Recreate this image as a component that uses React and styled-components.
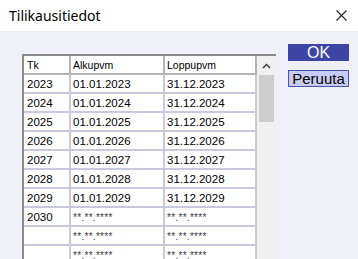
import React from 'react';
import styled, { createGlobalStyle } from 'styled-components';

const GlobalStyle = createGlobalStyle`
  html, body {
    margin: 0;
    padding: 0;
    background: #f0f0f9;
  }
`;

const Window = styled.div`
  width: 358px;
  height: 259px;
  overflow: hidden;
  display: flex;
  flex-direction: column;
  background: #f0f0f9;
`;

const TitleBar = styled.div`
  height: 31px;
  flex: none;
  background: #ffffff;
  display: flex;
  align-items: center;
  justify-content: space-between;
  padding: 0 11px 0 9px;
  font-family: 'Noto Sans', 'Open Sans', sans-serif;
  color: #000;
  h1 {
    margin: 0;
    font-size: 14px;
    font-weight: 400;
  }
`;

const Body = styled.div`
  flex: 1;
  display: flex;
  align-items: flex-start;
  padding: 13px 0 0 22px;
  gap: 12px;
`;

const Frame = styled.div`
  margin-top: 10px;
  display: flex;
  border-top: 2px solid #8a8a8a;
  border-left: 2px solid #8a8a8a;
  background: #fff;
`;

const Grid = styled.div`
  display: grid;
  grid-template-columns: 47px 94px 92px;
  grid-auto-rows: 19px;
  font-family: 'Liberation Sans', Arial, sans-serif;
`;

const Cell = styled.div`
  box-sizing: border-box;
  border-right: 2px solid ${({ head }) => (head ? '#b4b4b4' : '#c9c9dd')};
  border-bottom: 2px solid ${({ head }) => (head ? '#b4b4b4' : '#c9c9dd')};
  padding-left: ${({ first }) => (first ? '3px' : '2px')};
  font-size: ${({ head }) => (head ? '10.5px' : '11.5px')};
  line-height: 18px;
  color: #000;
  white-space: nowrap;
  overflow: hidden;
`;

const Blank = styled.span`
  font-size: 10px;
  color: #3a3a3a;
  letter-spacing: 0.3px;
`;

const Scrollbar = styled.div`
  width: 19px;
  display: flex;
  flex-direction: column;
  background: #f0f0f0;
`;

const ArrowBtn = styled.div`
  height: 19px;
  display: flex;
  align-items: center;
  justify-content: center;
  background: #f0f0f0;
`;

const Thumb = styled.div`
  height: 47px;
  margin: 0 2px;
  background: #cdcdcd;
`;

const Buttons = styled.div`
  display: flex;
  flex-direction: column;
  gap: 9px;
`;

const Button = styled.button`
  width: 61px;
  height: 17px;
  padding: 0;
  box-sizing: border-box;
  font-family: 'Liberation Sans', Arial, sans-serif;
  font-size: ${({ primary }) => (primary ? '16px' : '15px')};
  line-height: 15px;
  color: ${({ primary }) => (primary ? '#fff' : '#000')};
  background: ${({ primary }) => (primary ? '#3d46a6' : '#c9ccf2')};
  border: 1px solid ${({ primary }) => (primary ? '#3d46a6' : '#4a52b0')};
`;

const rows = [
  ['2023', '01.01.2023', '31.12.2023'],
  ['2024', '01.01.2024', '31.12.2024'],
  ['2025', '01.01.2025', '31.12.2025'],
  ['2026', '01.01.2026', '31.12.2026'],
  ['2027', '01.01.2027', '31.12.2027'],
  ['2028', '01.01.2028', '31.12.2028'],
  ['2029', '01.01.2029', '31.12.2029'],
  ['2030', null, null],
  ['', null, null],
  ['', null, null],
];

const Val = ({ v }) => (v === null ? <Blank>**.**.****</Blank> : v);

export default function App() {
  return (
    <Window>
      <GlobalStyle />
      <TitleBar>
        <h1>Tilikausitiedot</h1>
        <svg width="11" height="11" viewBox="0 0 11 11">
          <path d="M0.5 0.5 L10.5 10.5 M10.5 0.5 L0.5 10.5" stroke="#222" strokeWidth="1.1" />
        </svg>
      </TitleBar>
      <Body>
        <Frame>
          <Grid>
            <Cell head first>Tk</Cell>
            <Cell head>Alkupvm</Cell>
            <Cell head>Loppupvm</Cell>
            {rows.map((r, i) => (
              <React.Fragment key={i}>
                <Cell first>{r[0]}</Cell>
                <Cell><Val v={r[1]} /></Cell>
                <Cell><Val v={r[2]} /></Cell>
              </React.Fragment>
            ))}
          </Grid>
          <Scrollbar>
            <ArrowBtn>
              <svg width="9" height="6" viewBox="0 0 9 6">
                <path d="M1 5 L4.5 1.5 L8 5" stroke="#333" strokeWidth="1.3" fill="none" />
              </svg>
            </ArrowBtn>
            <Thumb />
          </Scrollbar>
        </Frame>
        <Buttons>
          <Button primary>OK</Button>
          <Button>Peruuta</Button>
        </Buttons>
      </Body>
    </Window>
  );
}
